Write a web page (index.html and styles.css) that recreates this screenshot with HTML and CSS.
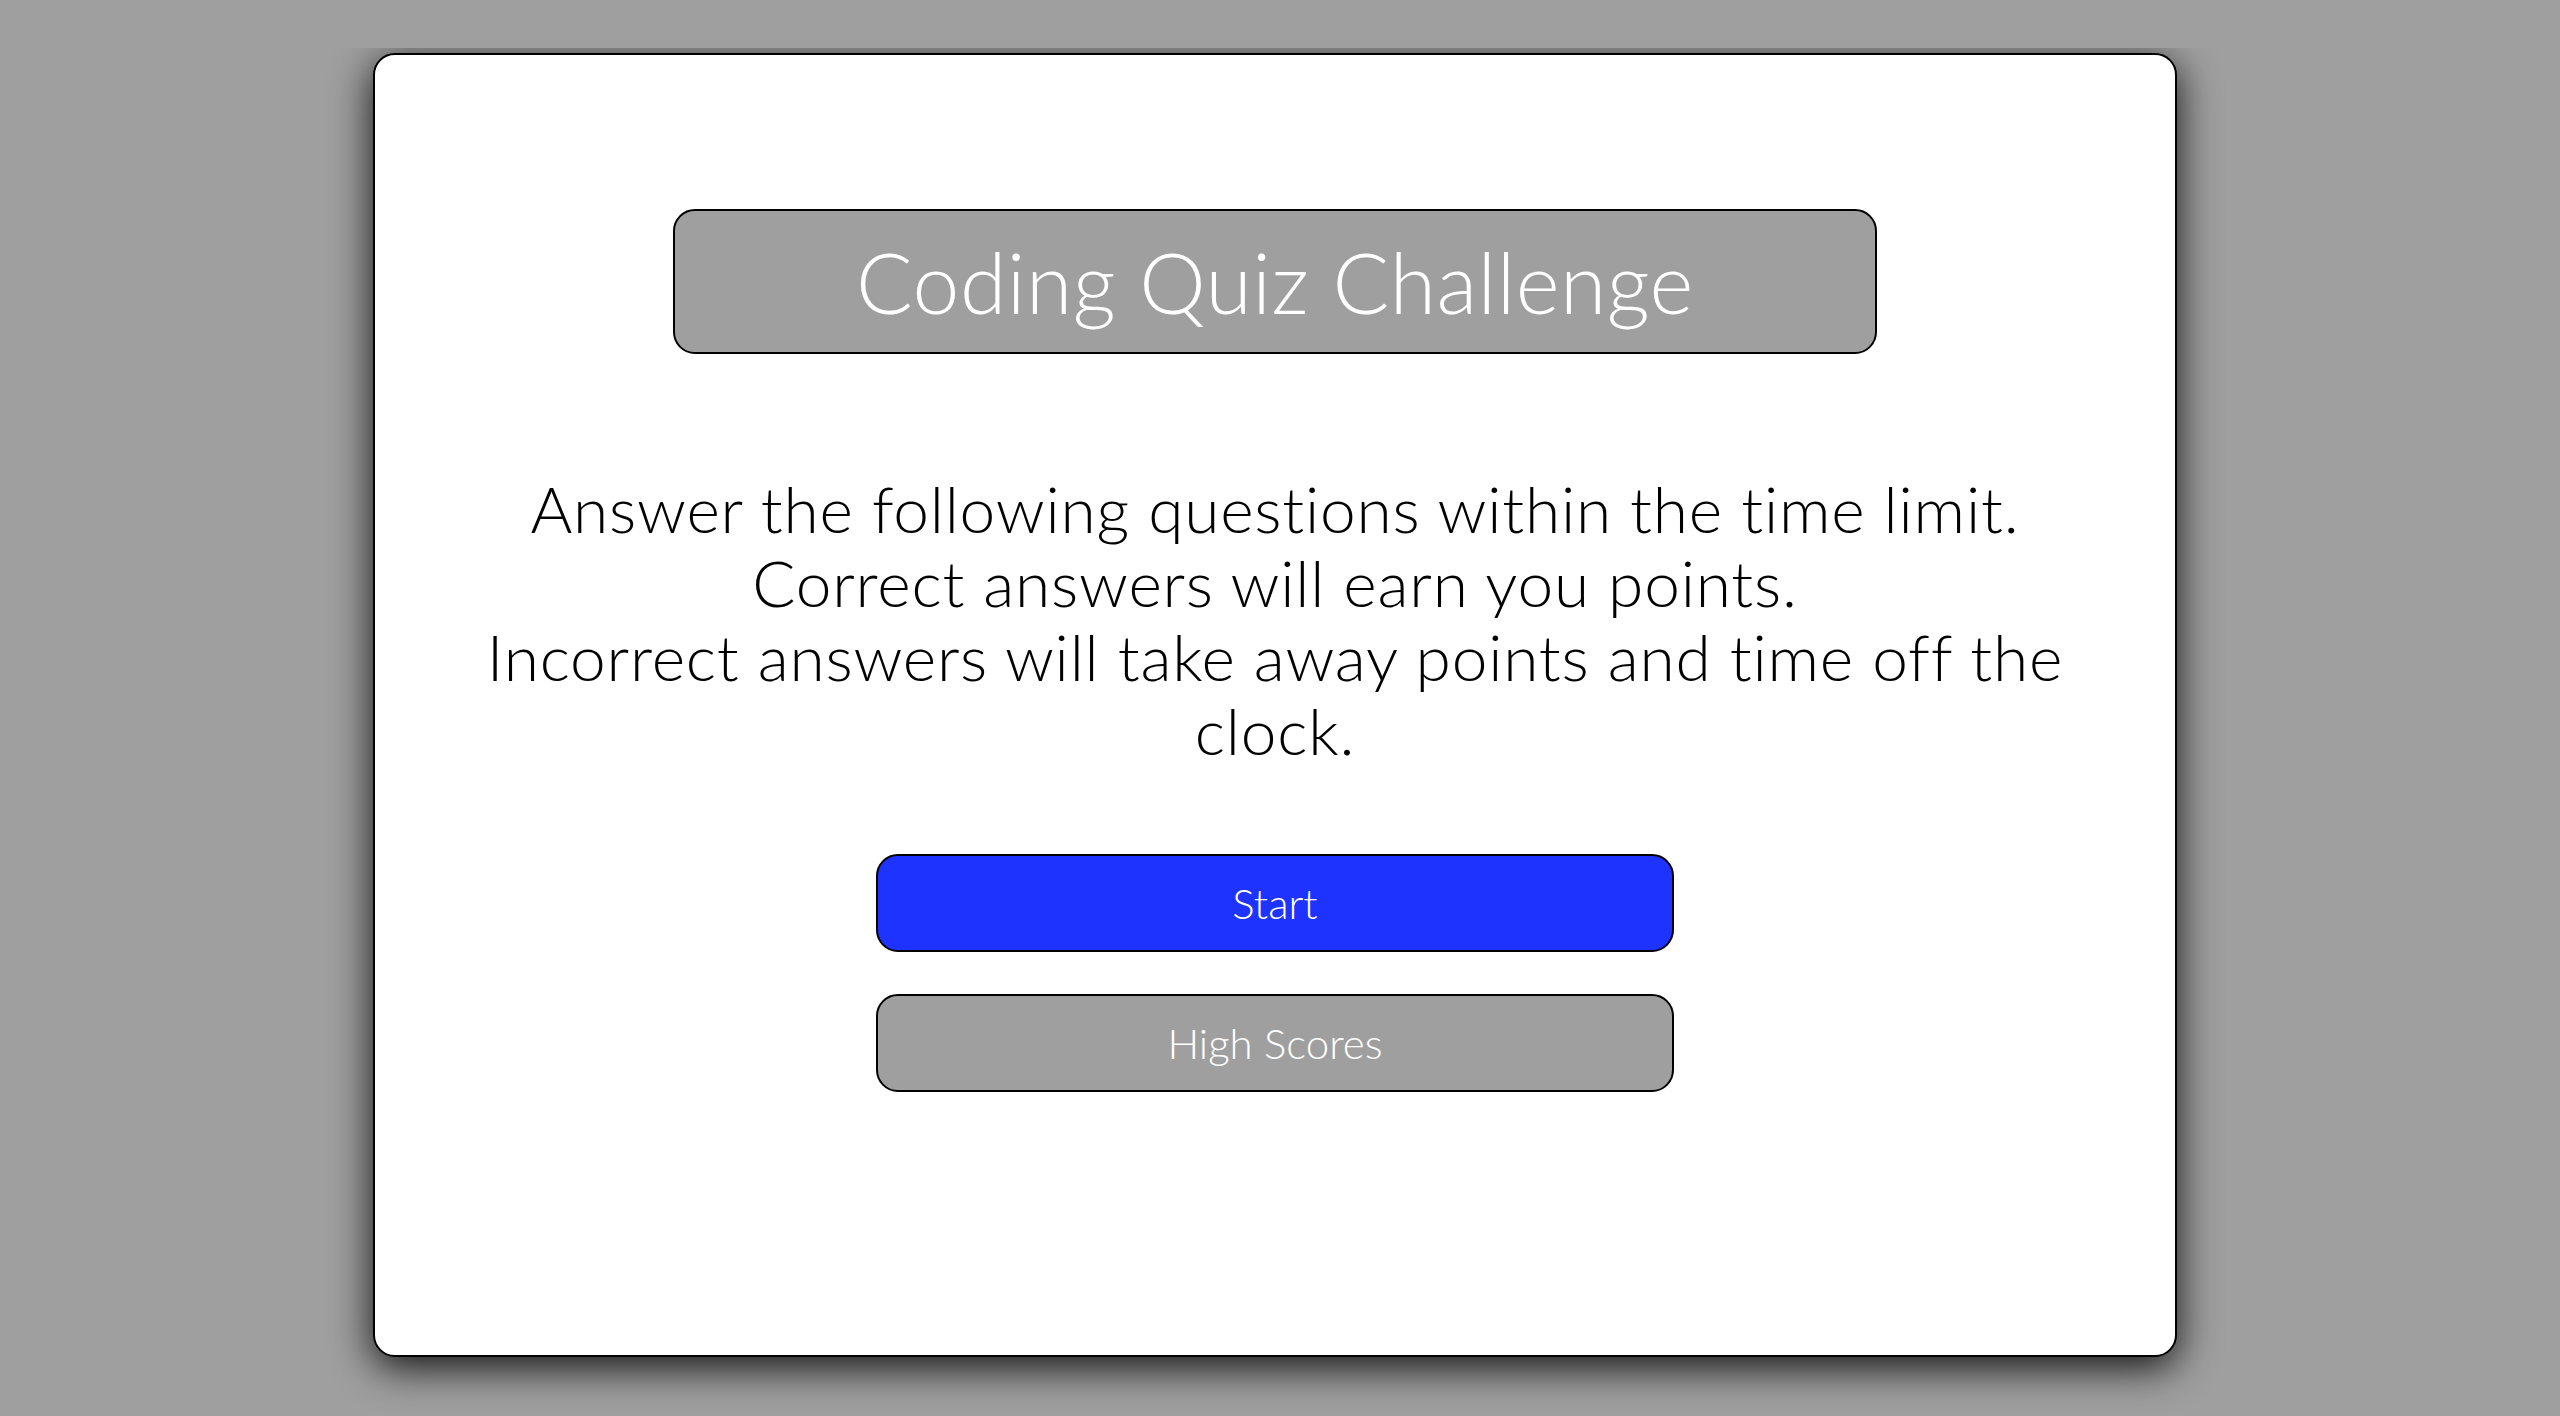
FILE: index.html
```html
<!DOCTYPE html>
<html lang="en">
<head>
<meta charset="utf-8">
<title>Coding Quiz Challenge</title>
<link rel="stylesheet" href="styles.css">
</head>
<body>
<header class="top-bar"></header>
<main class="stage">
  <section class="card">
    <h1 class="title">Coding Quiz Challenge</h1>
    <p class="intro">Answer the following questions within the time limit.<br>Correct answers will earn you points.<br>Incorrect answers will take away points and time off the<br>clock.</p>
    <div class="actions">
      <button class="btn btn-start" type="button">Start</button>
      <button class="btn btn-scores" type="button">High Scores</button>
    </div>
  </section>
</main>
</body>
</html>
```

FILE: styles.css
```css
html, body {
  margin: 0;
  padding: 0;
  background: #9f9f9f;
  font-family: "Lato", "Open Sans", sans-serif;
  font-weight: 300;
  font-variant-ligatures: none;
}

body {
  min-height: 100vh;
}

.top-bar {
  position: relative;
  z-index: 2;
  height: 48px;
  background: #9f9f9f;
}

.stage {
  position: relative;
  z-index: 1;
  display: flex;
  padding: 5px 0 59px 373px;
}

.card {
  box-sizing: border-box;
  width: 1804px;
  height: 1304px;
  background: #ffffff;
  border: 2px solid #000;
  border-radius: 22px;
  box-shadow: 0 10px 40px rgba(0, 0, 0, 0.9);
  display: flex;
  flex-direction: column;
  align-items: center;
  padding-top: 154px;
}

.title {
  box-sizing: border-box;
  width: 1204px;
  height: 145px;
  margin: 0;
  display: flex;
  align-items: center;
  justify-content: center;
  background: #9f9f9f;
  border: 2px solid #000;
  border-radius: 22px;
  color: #fff;
  font-weight: 300;
  font-size: 84px;
  line-height: 1;
  letter-spacing: 0.5px;
}

.intro {
  margin: 118px 0 0;
  text-align: center;
  color: #000;
  font-size: 64px;
  line-height: 74px;
  letter-spacing: 0.8px;
}

.actions {
  display: flex;
  flex-direction: column;
  gap: 42px;
  margin-top: 86px;
}

.btn {
  box-sizing: border-box;
  width: 798px;
  height: 98px;
  border: 2px solid #000;
  border-radius: 22px;
  color: #fff;
  font-family: inherit;
  font-weight: 300;
  font-size: 42px;
  font-variant-ligatures: none;
  padding: 0;
  cursor: pointer;
}

.btn-start {
  background: #1f33ff;
}

.btn-scores {
  background: #9f9f9f;
}
```
